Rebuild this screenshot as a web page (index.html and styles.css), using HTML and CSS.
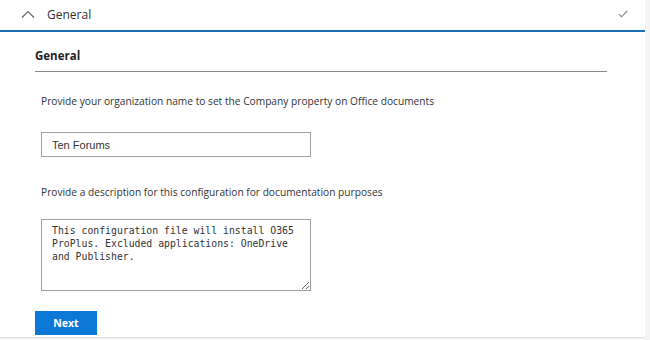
FILE: index.html
```html
<!DOCTYPE html>
<html lang="en">
<head>
    <meta charset="UTF-8">
    <title>General</title>
    <link rel="stylesheet" href="styles.css">
</head>
<body>
    <div class="page">
        <div class="panel">
            <!-- 可收合的標題列 -->
            <div class="panel-head">
                <svg class="chev" width="14" height="8" viewBox="0 0 14 8">
                    <path d="M1 7.5 L7 1.5 L13 7.5" fill="none" stroke="#666" stroke-width="1.2"/>
                </svg>
                <span class="head-title">General</span>
                <svg class="check" width="10" height="8" viewBox="0 0 10 8">
                    <path d="M0.8 4.2 L3.5 6.8 L9.2 1" fill="none" stroke="#888" stroke-width="1.1"/>
                </svg>
            </div>

            <div class="panel-body">
                <h2 class="section-title">General</h2>

                <div class="field">
                    <p>Provide your organization name to set the Company property on Office documents</p>
                    <input class="text-input" type="text" value="Ten Forums">
                </div>

                <div class="field">
                    <p>Provide a description for this configuration for documentation purposes</p>
                    <textarea class="text-area">This configuration file will install O365 ProPlus. Excluded applications: OneDrive and Publisher.</textarea>
                </div>

                <button class="btn">Next</button>
            </div>
        </div>
    </div>
</body>
</html>
```

FILE: styles.css
```css
*{
    margin: 0;
    padding: 0;
    box-sizing: border-box;
}
body{
    background-color: #f4f4f4;
    font-family: "Open Sans", "Noto Sans", sans-serif;
    color: #323130;
}
.page{
    width: 650px;
    height: 340px;
    overflow: hidden;
}
.panel{
    width: 645px;
    height: 338px;
    background-color: #fff;
    border-bottom: 1px solid #e1e1e1;
}
.panel-head{
    height: 32px;
    display: flex;
    align-items: center;
    padding: 0 0 2px 21px;
    border-bottom: 2px solid #1a6fb8;
}
.chev{
    display: block;
}
.head-title{
    margin-left: 12px;
    font-size: 12px;
    color: #333;
    flex: 1;
}
.check{
    display: block;
    margin-right: 17px;
}
.panel-body{
    padding: 16px 0 0 35px;
}
.section-title{
    width: 572px;
    font-size: 11.5px;
    font-weight: 700;
    color: #222;
    padding-bottom: 8px;
    border-bottom: 1px solid #8a8a8a;
}
.field{
    padding-left: 6px;
}
.field p{
    font-size: 10.2px;
    color: #333;
    margin-top: 22px;
    line-height: 14px;
}
.text-input{
    display: block;
    margin-top: 24px;
    width: 270px;
    height: 25px;
    border: 1px solid #a0a0a0;
    padding: 0 10px;
    font-family: "Liberation Sans", Arial, sans-serif;
    font-size: 11px;
    color: #333;
    outline: none;
}
.field + .field p{
    margin-top: 28px;
}
.text-area{
    display: block;
    margin-top: 20px;
    width: 270px;
    height: 72px;
    border: 1px solid #a0a0a0;
    padding: 4px 10px 3px;
    font-family: "DejaVu Sans Mono", monospace;
    font-size: 9.8px;
    line-height: 13px;
    color: #333;
    resize: both;
    outline: none;
}
.btn{
    display: block;
    margin-top: 20px;
    width: 62px;
    height: 24px;
    background-color: #0a78d4;
    color: #fff;
    border: none;
    font-family: "Open Sans", sans-serif;
    font-size: 10.5px;
    font-weight: 700;
}
```
